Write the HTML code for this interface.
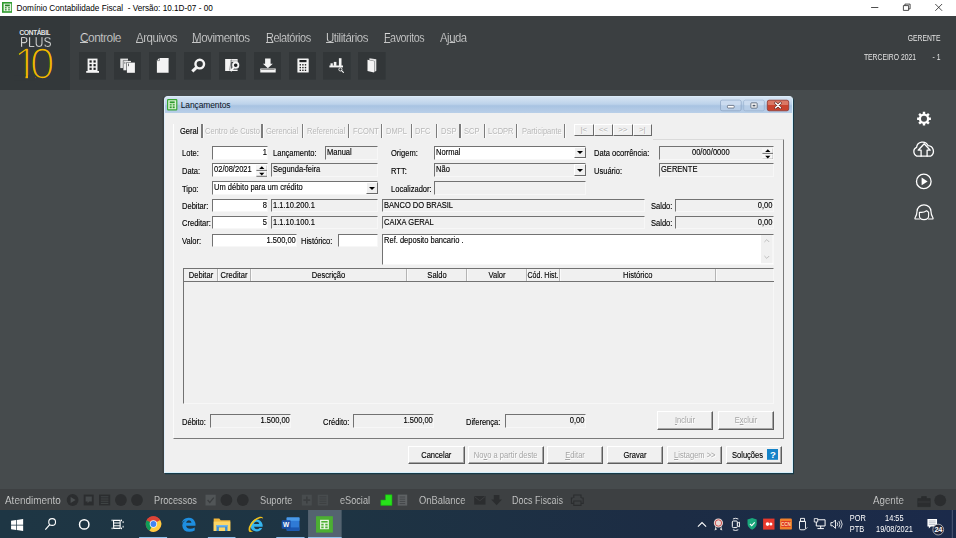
<!DOCTYPE html>
<html lang="pt-BR">
<head>
<meta charset="utf-8">
<title>Domínio Contabilidade Fiscal</title>
<style>
*{box-sizing:border-box;margin:0;padding:0}
html,body{width:956px;height:538px;overflow:hidden;background:#464b4d;font-family:"Liberation Sans",sans-serif}
.a{position:absolute;white-space:nowrap}
#titlebar{left:0;top:0;width:956px;height:16px;background:#fff}
#titlebar .t{left:16.6px;top:4px;font-size:8.2px;color:#000;line-height:10px}
#header{left:0;top:16px;width:956px;height:73.5px;background:#3b3f41}
#logo{left:0;top:16px;width:70px;height:73.5px;background:#33383a}
.menu{-webkit-text-stroke:0.2px #3b3f41;transform-origin:0 0;top:29.5px;font-size:11.9px;color:#dadada;line-height:16px;letter-spacing:-0.5px}
.menu u{text-decoration:none;background:linear-gradient(#d6d6d6,#d6d6d6) 0 11.3px/100% 0.9px no-repeat}
.ib{top:52px;width:28px;height:28px;background:#2f3234}
.hr{color:#e4e4e4;font-size:9px;line-height:10px;text-align:right;right:15px;transform:scaleX(0.755);transform-origin:100% 0}
#status{left:0;top:489.4px;width:956px;height:20.4px;background:#3d4042}
.st{-webkit-text-stroke:0.2px #3d4042;top:494px;font-size:10.2px;color:#dedede;line-height:13px;transform-origin:0 0}
#taskbar{left:0;top:509.6px;width:956px;height:28.4px;background:linear-gradient(90deg,#1e3644 0%,#1e3443 35%,#1c2c44 70%,#1b2a4a 100%)}
.tk{font-size:8.2px;line-height:10px;color:#fff;text-align:center;transform:scaleX(0.9);transform-origin:50% 0}
/* dialog */
#dlg{left:163.6px;top:95.6px;width:629.6px;height:377px;background:#f0f0f0;border-radius:4px 4px 0 0;border:1px solid #dcecf9;border-right:1.8px solid #d6eefa;border-bottom:1px solid #d6eefa;box-shadow:1px 1.2px 0 #173a48,-1.6px 0 0 #3c4042}
#dtitle{left:164.5px;top:96.5px;width:627px;height:16.5px;border-radius:3px 3px 0 0;background:linear-gradient(180deg,#d6e4f3 0%,#bcd2ea 45%,#a8c3e2 55%,#b9cfe8 100%)}
.dt{left:180.7px;top:100px;font-size:8.5px;line-height:11px;color:#0c1424;letter-spacing:-0.12px}
.dl{font-size:9.6px;line-height:11px;color:#000;transform:scaleX(0.785);transform-origin:0 0}
.dl.c{transform-origin:50% 0;text-align:center}
.f{height:13.7px;border-top:1.7px solid #727272;border-left:1.7px solid #727272;border-right:1px solid #f7f7f7;border-bottom:1px solid #f7f7f7;font-size:9.6px;line-height:10px;color:#000;padding:0 1px;overflow:hidden;background:#f0f0f0}
.s{display:block;transform:scaleX(0.785);transform-origin:0 0;white-space:nowrap}
.r .s{transform-origin:100% 0}
.c .s,.btn .s{transform-origin:50% 0}
.btn .s{margin:0 -20px}
.dl,.f,.btn,.tab{-webkit-text-stroke-width:0.15px}
.w{background:#fff}
.tab.on{-webkit-text-stroke-width:0.15px}
.r{text-align:right;padding-right:0}
.r .s{margin-right:0.2px}
.c{text-align:center}
.btn{height:18.4px;border:1px solid;border-color:#fff #5e5e5e #5e5e5e #fff;box-shadow:inset -1px -1px 0 #a6a6a6;background:#f0f0f0;font-size:9.6px;line-height:16px;text-align:center;color:#000}
.dis{color:#a4a4a4;text-shadow:0.7px 0.7px 0 #fff;-webkit-text-stroke-width:0}
.tab{-webkit-text-stroke-width:0;top:125.3px;font-size:9.6px;line-height:11px;color:#b8b8b8;text-shadow:0.7px 0.7px 0 #fff;transform:scaleX(0.785);transform-origin:0 0}
.sep{top:124.4px;width:1.2px;height:13.6px;background:#7c7c7c;box-shadow:1px 0 0 #fbfbfb}
.nb{top:124px;height:12.4px;width:19.6px;border-right:1.4px solid #6a6a6a;border-bottom:1.4px solid #6a6a6a;border-top:1px solid #fff;border-left:1px solid #fff;color:#b0b0b0;font-size:8px;line-height:9px;text-align:center;text-shadow:0.7px 0.7px 0 #fff}
.cb{width:12px;height:11.2px;background:#f0f0f0;border:1px solid;border-color:#fff #6a6a6a #6a6a6a #fff}
.cb:after{content:"";position:absolute;left:1.9px;top:3.2px;width:0;height:0;border-left:3.1px solid transparent;border-right:3.1px solid transparent;border-top:3.3px solid #000}
</style>
</head>
<body>
<div class="a" id="titlebar">
  <svg class="a" style="left:1.6px;top:2.2px" width="10.8" height="10.8" viewBox="0 0 10.8 10.8"><rect x="0.8" y="0.8" width="9.2" height="9.2" fill="#e4f6e0" stroke="#2f9a2e" stroke-width="1.6"/><rect x="3" y="2.6" width="4.8" height="1.7" fill="#2a7f2a"/><rect x="3" y="5.2" width="1.6" height="1.2" fill="#2a7f2a"/><rect x="6.2" y="5.2" width="1.6" height="1.2" fill="#2a7f2a"/><rect x="3" y="7.2" width="1.6" height="1.2" fill="#2a7f2a"/><rect x="6.2" y="7.2" width="1.6" height="1.2" fill="#2a7f2a"/></svg>
  <div class="a t">Domínio Contabilidade Fiscal&nbsp; - Versão: 10.1D-07 - 00</div>
</div>
<div class="a" id="header"></div>
<div class="a" id="logo"></div>

<div class="a" style="left:19.5px;top:28.6px;font-size:6.3px;line-height:7px;color:#fff;letter-spacing:-0.1px;-webkit-text-stroke:0.15px #fff">CONTÁBIL</div>
<div class="a" style="left:19.8px;top:34.2px;font-size:14px;line-height:16px;color:#f6f6f6;letter-spacing:0;-webkit-text-stroke:0.35px #33383a;transform:scaleX(0.86);transform-origin:0 0">PLUS</div>
<svg class="a" style="left:10px;top:47px" width="50" height="36" viewBox="0 0 50 36"><text x="3.7 20" y="32.4" font-family="Liberation Sans, sans-serif" font-size="44" fill="#f4b800" stroke="#33383a" stroke-width="1.6">10</text><rect x="4" y="28.4" width="11.5" height="5" fill="#33383a"/><rect x="18" y="28.4" width="7" height="5" fill="#33383a"/></svg>
<div class="a menu" style="left:80px;transform:scaleX(1.0)"><u>C</u>ontrole</div>
<div class="a menu" style="left:136px;transform:scaleX(0.97)"><u>A</u>rquivos</div>
<div class="a menu" style="left:192px;transform:scaleX(0.973)"><u>M</u>ovimentos</div>
<div class="a menu" style="left:265.6px;transform:scaleX(0.922)"><u>R</u>elatórios</div>
<div class="a menu" style="left:326px;transform:scaleX(0.965)"><u>U</u>tilitários</div>
<div class="a menu" style="left:383.6px;transform:scaleX(0.905)"><u>F</u>avoritos</div>
<div class="a menu" style="left:440px;transform:scaleX(0.953)">Aj<u>u</u>da</div>
<div class="a hr" id="h1" style="top:32.5px">GERENTE</div>
<div class="a hr" id="h2" style="top:51.5px;right:40px">TERCEIRO 2021</div>
<div class="a hr" id="h3" style="top:51.5px">- 1</div>
<svg class="a" style="left:866px;top:0" width="90" height="16" viewBox="0 0 90 16"><path d="M5.1 7.5 h7.2" stroke="#222" stroke-width="0.8" fill="none"/><path d="M37.4 5.6 h5.2 v4.8 h-5.2z M38.9 5.6 v-1.5 h5.2 v4.8 h-1.5" stroke="#222" stroke-width="0.8" fill="none"/><path d="M69.3 4 l6.8 6.8 M76.1 4 l-6.8 6.8" stroke="#222" stroke-width="0.8" fill="none"/></svg>
<svg class="a" style="left:78.80px;top:52.2px" width="27.6" height="27.6" viewBox="0 0 27.6 27.6"><rect width="27.6" height="27.6" fill="#323638"/><rect x="8.6" y="6.6" width="9.9" height="12.6" fill="#f4f4f4"/><rect x="7.2" y="19" width="12.8" height="1.8" fill="#f4f4f4"/><rect x="10.5" y="8.4" width="2.2" height="2.2" fill="#1e2022"/><rect x="10.5" y="12.1" width="2.2" height="2.2" fill="#1e2022"/><rect x="10.5" y="15.7" width="2.2" height="2.2" fill="#1e2022"/><rect x="14.5" y="8.4" width="2.2" height="2.2" fill="#1e2022"/><rect x="14.5" y="12.1" width="2.2" height="2.2" fill="#1e2022"/><rect x="14.5" y="15.7" width="2.2" height="2.2" fill="#1e2022"/></svg>
<svg class="a" style="left:113.75px;top:52.2px" width="27.6" height="27.6" viewBox="0 0 27.6 27.6"><rect width="27.6" height="27.6" fill="#323638"/><rect x="6.3" y="6.6" width="7.7" height="9.5" fill="#e0e0e0"/><rect x="8.9" y="8.5" width="8.2" height="10" fill="#323638"/><rect x="9.4" y="8.9" width="7.5" height="9.4" fill="#ececec"/><rect x="12.4" y="10.2" width="8.7" height="10.8" fill="#323638"/><rect x="12.9" y="10.6" width="8" height="10.2" fill="#f4f4f4"/><rect x="14.2" y="11.6" width="0.7" height="2.6" fill="#323638"/><rect x="10.6" y="9.8" width="0.6" height="2" fill="#323638"/></svg>
<svg class="a" style="left:148.70px;top:52.2px" width="27.6" height="27.6" viewBox="0 0 27.6 27.6"><rect width="27.6" height="27.6" fill="#323638"/><path d="M7.9 8.4 l2.4 -2.4 h9.3 v14.7 h-11.7z" fill="#f4f4f4"/><path d="M7.9 8.6 h2.6 v-2.6" fill="none" stroke="#323638" stroke-width="0.5"/></svg>
<svg class="a" style="left:183.65px;top:52.2px" width="27.6" height="27.6" viewBox="0 0 27.6 27.6"><rect width="27.6" height="27.6" fill="#323638"/><circle cx="15.75" cy="12.1" r="4.3" fill="none" stroke="#f4f4f4" stroke-width="2.4"/><path d="M12.3 15.6 L8.3 19.4" stroke="#f4f4f4" stroke-width="3" stroke-linecap="butt"/></svg>
<svg class="a" style="left:218.60px;top:52.2px" width="27.6" height="27.6" viewBox="0 0 27.6 27.6"><rect width="27.6" height="27.6" fill="#323638"/><path d="M6.4 7 h12.2 v3 h-6.4 v9 h-5.8z" fill="#f4f4f4"/><path d="M6.4 7 h6 l-1.2 12 h-4.8z" fill="#f4f4f4"/><path d="M11.2 8.3 h7 M11.6 9.3 h6.6" stroke="#9a9a9a" stroke-width="0.5"/><path d="M12.2 17.6 h6.4 v1.4 h-6.4z" fill="#f4f4f4"/><circle cx="16.7" cy="13.2" r="2.7" fill="#1e2022" stroke="#f4f4f4" stroke-width="1.8"/><path d="M14.6 15.6 L11.6 19.2" stroke="#f4f4f4" stroke-width="2" stroke-linecap="butt"/><path d="M12.4 7.6 L10.6 18.4" stroke="#323638" stroke-width="0.5"/></svg>
<svg class="a" style="left:253.55px;top:52.2px" width="27.6" height="27.6" viewBox="0 0 27.6 27.6"><rect width="27.6" height="27.6" fill="#323638"/><path d="M11.1 6.6 h5.5 v5.1 h2.2 l-4.95 4.6 l-4.95 -4.6 h2.2z" fill="#f4f4f4"/><rect x="6.3" y="16.5" width="15.4" height="4" fill="#f4f4f4"/><rect x="7.2" y="17.4" width="13.4" height="0.6" fill="#555"/></svg>
<svg class="a" style="left:288.50px;top:52.2px" width="27.6" height="27.6" viewBox="0 0 27.6 27.6"><rect width="27.6" height="27.6" fill="#323638"/><rect x="8.4" y="6.6" width="11.3" height="13.9" rx="0.5" fill="#f4f4f4"/><rect x="10.4" y="8" width="7.1" height="2.2" fill="#1e2022"/><rect x="10.600000000000001" y="12.100000000000001" width="1.4" height="1.4" fill="#222"/><rect x="10.600000000000001" y="14.9" width="1.4" height="1.4" fill="#222"/><rect x="10.600000000000001" y="17.6" width="1.4" height="1.4" fill="#222"/><rect x="13.200000000000001" y="12.100000000000001" width="1.4" height="1.4" fill="#222"/><rect x="13.200000000000001" y="14.9" width="1.4" height="1.4" fill="#222"/><rect x="13.200000000000001" y="17.6" width="1.4" height="1.4" fill="#222"/><rect x="15.8" y="12.100000000000001" width="1.4" height="1.4" fill="#222"/><rect x="15.8" y="14.9" width="1.4" height="1.4" fill="#222"/><rect x="15.8" y="17.6" width="1.4" height="1.4" fill="#222"/></svg>
<svg class="a" style="left:323.45px;top:52.2px" width="27.6" height="27.6" viewBox="0 0 27.6 27.6"><rect width="27.6" height="27.6" fill="#323638"/><rect x="7.5" y="11.3" width="2.3" height="3" fill="#f4f4f4"/><rect x="10.8" y="9.9" width="2.6" height="4" fill="#f4f4f4"/><rect x="15.9" y="6.2" width="2.6" height="8" fill="#f4f4f4"/><rect x="6.4" y="13.5" width="13.6" height="1.9" fill="#f4f4f4"/><circle cx="17.4" cy="17.4" r="1.6" fill="#323638" stroke="#f4f4f4" stroke-width="0.9"/><path d="M18.6 18.6 L20.4 20.5" stroke="#f4f4f4" stroke-width="1.1" stroke-linecap="round"/></svg>
<svg class="a" style="left:358.40px;top:52.2px" width="27.6" height="27.6" viewBox="0 0 27.6 27.6"><rect width="27.6" height="27.6" fill="#323638"/><path d="M11.4 6.2 L18.3 7.3 V18.7 L16.4 19.9 V9 L11.4 7.9z" fill="#e4e4e4"/><path d="M9.5 7.7 L16.1 9.3 V20.5 L9.5 19z" fill="#f4f4f4"/></svg>
<svg class="a" style="left:908px;top:106px" width="32" height="120" viewBox="0 0 32 120">
<path d="M22.90 11.50 L22.90 13.90 L21.06 13.91 L20.43 15.42 L21.73 16.73 L20.03 18.43 L18.72 17.13 L17.21 17.76 L17.20 19.60 L14.80 19.60 L14.79 17.76 L13.28 17.13 L11.97 18.43 L10.27 16.73 L11.57 15.42 L10.94 13.91 L9.10 13.90 L9.10 11.50 L10.94 11.49 L11.57 9.98 L10.27 8.67 L11.97 6.97 L13.28 8.27 L14.79 7.64 L14.80 5.80 L17.20 5.80 L17.21 7.64 L18.72 8.27 L20.03 6.97 L21.73 8.67 L20.43 9.98 L21.06 11.49Z" fill="#fff"/><circle cx="16" cy="12.7" r="3" fill="#494d4f"/>
<path d="M13.1 50.2 H10.4 A4.6 4.6 0 0 1 8.6 41.4 A6 6 0 0 1 20 39.6 A5.7 5.7 0 0 1 22.6 50.2 H19.1" fill="none" stroke="#fff" stroke-width="1.3" stroke-linecap="round" stroke-linejoin="round"/>
<path d="M16.2 37.8 L22.2 44.2 H19.1 V50.2 H13.1 V44.2 H10.2 Z" fill="none" stroke="#fff" stroke-width="1.3" stroke-linejoin="round"/>
<circle cx="15.8" cy="75.4" r="7.3" fill="none" stroke="#fff" stroke-width="1.3"/><path d="M13.6 71.6 l6 3.8 l-6 3.8z" fill="#fff"/>
<path d="M11.4 113 H7.6 Q6.6 113 7.1 111.8 Q9 108.8 9 105.6 A7 6.8 0 0 1 23 105.6 Q23 108.8 24.9 111.8 Q25.4 113 24.4 113 H20.6" fill="none" stroke="#fff" stroke-width="1.2" stroke-linejoin="round" stroke-linecap="round"/>
<path d="M11.4 110 V106.2 Q15.4 107 18.6 104.8 Q20 105.4 20.6 106.6 V110 Q20.6 113.6 16 113.6 Q11.4 113.6 11.4 110z" fill="none" stroke="#fff" stroke-width="1.1" stroke-linejoin="round"/>
</svg>
<div class="a" id="status"></div>
<div class="a" id="taskbar"></div>
<div class="a st" id="s1" style="left:4.6px;transform:scaleX(0.974)">Atendimento</div>
<div class="a st" id="s2" style="left:153.8px;transform:scaleX(0.902)">Processos</div>
<div class="a st" id="s3" style="left:259.5px;transform:scaleX(0.908)">Suporte</div>
<div class="a st" id="s4" style="left:340px;transform:scaleX(0.898)">eSocial</div>
<div class="a st" id="s5" style="left:418.5px;transform:scaleX(0.922)">OnBalance</div>
<div class="a st" id="s6" style="left:512.4px;transform:scaleX(0.883)">Docs Fiscais</div>
<div class="a st" id="s7" style="left:873.1px;transform:scaleX(0.954)">Agente</div>
<svg class="a" style="left:0;top:489px" width="956" height="21" viewBox="0 0 956 21">
<circle cx="72.6" cy="11" r="5.9" fill="#2b2d2f"/><path d="M70.6 8 l5 3 l-5 3z" fill="#4a4e50"/>
<rect x="83.7" y="5.6" width="10" height="10.8" fill="#2b2d2f"/><path d="M85.6 7.6 h6.2 v5 h-2.6 l-1.6 1.6 v-1.6 h-2z" fill="#45494b"/>
<rect x="99" y="5.6" width="11.2" height="10.8" fill="#2b2d2f"/><path d="M100.8 7.8 h7.6 M100.8 10 h7.6 M100.8 12.2 h7.6 M100.8 14.4 h7.6" stroke="#45494b" stroke-width="0.9"/>
<circle cx="120.9" cy="11" r="5.9" fill="#2b2d2f"/><circle cx="137" cy="11" r="5.9" fill="#2b2d2f"/>
<rect x="205.5" y="5.7" width="10.2" height="10.8" fill="#515557"/><path d="M207.6 11 l2.2 2.4 l4 -4.8" fill="none" stroke="#3a3d3f" stroke-width="1.3"/>
<circle cx="226.4" cy="11" r="5.9" fill="#2b2d2f"/><circle cx="242.8" cy="11" r="5.9" fill="#2b2d2f"/>
<rect x="301.8" y="5.7" width="10" height="10.8" fill="#484c4e"/><path d="M306.8 7.6 v7 M303.4 11.1 h6.8" stroke="#3a3d3f" stroke-width="1.6"/>
<rect x="317.7" y="5.7" width="10.4" height="10.8" fill="#484c4e"/><path d="M319.4 7.8 h7 M319.4 10 h7 M319.4 12.2 h7 M319.4 14.4 h7" stroke="#3a3d3f" stroke-width="0.8"/>
<path d="M380.8 16.4 v-5.4 h4.6 v-5.2 h6.6 v10.6z" fill="#27e31a" stroke="#18a812" stroke-width="0.6"/>
<rect x="397.7" y="5.6" width="9.5" height="11" fill="#5e6264"/><path d="M399.6 8 h5.6 M399.6 10.2 h5.6 M399.6 12.4 h5.6 M399.6 14.6 h5.6" stroke="#3d4042" stroke-width="0.8"/>
<path d="M474.2 7 h11.3 v8.6 h-11.3z" fill="#2b2d2f"/><path d="M474.6 7.6 l5.2 4.2 l5.2 -4.2" fill="none" stroke="#3d4042" stroke-width="0.9"/>
<path d="M493.8 6 h5.6 v4.4 h2.6 l-5.4 5.8 l-5.4 -5.8 h2.6z" fill="#2b2d2f"/>
<path d="M573 9 h-1.6 v5.4 h2.4 M581.4 9 h1.8 v5.4 h-2.4 M573.8 9 v-3 h7.2 v3 M573.8 12 h7.2 v4.4 h-7.2z" fill="none" stroke="#2b2d2f" stroke-width="1.1"/>
<path d="M917.8 9.6 h12.4 v8 h-12.4z M921.6 9.4 v-1.8 h4.8 v1.8" fill="#2b2d2f" stroke="#2b2d2f" stroke-width="0.8"/><path d="M917.8 13 h12.4" stroke="#3d4042" stroke-width="0.7"/>
<circle cx="940.2" cy="11.3" r="5.9" fill="#2b2d2f"/>
</svg>
<svg class="a" style="left:0;top:509.6px" width="956" height="28.4" viewBox="0 0 956 28.4">
<rect x="308" y="0" width="33.6" height="28.4" fill="#546370"/>
<g fill="#8fc1ec"><rect x="139" y="27" width="28" height="1.4"/><rect x="207.8" y="27" width="27.6" height="1.4"/><rect x="276.2" y="27" width="28.3" height="1.4"/><rect x="308" y="27" width="33.6" height="1.4"/></g>
<g fill="#fff"><path d="M10.9 10.8 l5 -0.7 v4.6 h-5z M16.6 10 l6.4 -0.9 v5.6 h-6.4z M10.9 15.4 h5 v4.6 l-5 -0.7z M16.6 15.4 h6.4 v5.6 l-6.4 -0.9z"/></g>
<circle cx="52" cy="12" r="3.4" fill="none" stroke="#fff" stroke-width="1.1"/><path d="M49.6 14.6 L45.2 19.6" stroke="#fff" stroke-width="1.2"/>
<circle cx="84.1" cy="14.4" r="4.7" fill="none" stroke="#fff" stroke-width="1.5"/>
<path d="M113.4 10.4 h6.6 v8 h-6.4z" fill="none" stroke="#fff" stroke-width="1.1"/><path d="M112 9.6 v1.6 M112 17.6 v1.6 M121.4 9.6 v1.6 M121.4 17.6 v1.6 M123 11.2 v1.8 M123 15.8 v1.8 M113.4 13 h6.6 M113.4 15.8 h6.6" stroke="#fff" stroke-width="1"/>
<!-- chrome -->
<circle cx="153.3" cy="14" r="7.8" fill="#db4437"/><path d="M153.3 14 L146.5 10.2 A7.8 7.8 0 0 0 149.4 20.75z" fill="#0f9d58"/><path d="M153.3 14 L149.4 20.75 A7.8 7.8 0 0 0 160.05 10.1z" fill="#ffcd40"/><path d="M146.5 10.1 A7.8 7.8 0 0 1 160.05 10.1 H153.3z" fill="#db4437"/><circle cx="153.3" cy="14" r="3.7" fill="#f4f4f4"/><circle cx="153.3" cy="14" r="2.9" fill="#4285f4"/>
<!-- edge -->
<path d="M181.6 13.2 a7 7 0 0 1 13.6 -0.4 q0.4 1.6 0.2 3 h-9.4 q0.4 3 4 3 q2.4 0 4.6 -1.2 v3 q-2.4 1.2 -5.4 1.2 q-6.6 0 -7 -6.4 q0.2 -3.6 3.6 -5.2 q-2.8 0.6 -4.2 3z M186 12.8 h5.4 q-0.2 -2.6 -2.6 -2.6 q-2.4 0 -2.8 2.6z" fill="#1e8ee0"/>
<!-- explorer -->
<path d="M213.6 8.6 h5.6 l1.4 1.6 h9.6 v10.8 h-16.6z" fill="#f2b73c"/><path d="M213.6 11.6 h16.6 v9.4 h-16.6z" fill="#fbd668"/><path d="M216.4 15 h11 v6 h-11z" fill="#3b8fd6"/><path d="M218.8 17.4 h6.2 v3.6 h-6.2z" fill="#fbd668"/><path d="M216.4 15 h11 v1.6 h-11z" fill="#6bb4ef"/>
<!-- IE -->
<path d="M250.2 15.6 a6.2 6.2 0 0 1 12.3 -1 q0.2 1.4 0 2.2 h-8.6 q0.6 2.4 3 2.4 q1.6 0 2.6 -1.2 h2.6 q-1.6 3.4 -5.4 3.4 q-5.8 0 -6.5 -5.8z M253.8 14 h5.4 q-0.4 -2.2 -2.7 -2.2 q-2.2 0 -2.7 2.2z" fill="#35b5ef"/><path d="M249 21.4 q-1.6 -3 1.6 -8 q3.4 -5 9 -6.6 q3.6 -0.8 3.4 2.2 q-0.6 -1.6 -3.2 -0.8 q-4.6 1.6 -7.6 6 q-3 4.4 -1.4 6.4 q0.8 0.8 2.6 0.2 q-2.8 2 -4.4 0.6z" fill="#f2c21c"/>
<!-- word -->
<rect x="286.6" y="7.4" width="12.8" height="13.4" rx="0.8" fill="#2f7ad5"/><rect x="286.6" y="7.4" width="12.8" height="3.4" fill="#4a9bea"/><rect x="286.6" y="17.4" width="12.8" height="3.4" fill="#1b57b0"/><rect x="281.6" y="10.2" width="9" height="8.6" rx="0.8" fill="#1a4fa6"/><text x="286.1" y="17.2" text-anchor="middle" font-family="Liberation Sans, sans-serif" font-weight="bold" font-size="6.6" fill="#fff">W</text>
<!-- calc -->
<rect x="316" y="6.2" width="16.8" height="16.4" fill="#4caf32"/><rect x="320" y="9.8" width="8.8" height="9.4" fill="#eaf6e6"/><rect x="321.2" y="11" width="6.4" height="1.6" fill="#4caf32"/><path d="M321.2 13.8 h2.4 v1.6 h-2.4z M325.2 13.8 h2.4 v1.6 h-2.4z M321.2 16.4 h2.4 v1.8 h-2.4z M325.2 16.4 h2.4 v1.8 h-2.4z" fill="#4caf32"/>
<!-- tray -->
<path d="M698 16.6 l4.1 -4 l4.1 4" fill="none" stroke="#fff" stroke-width="1.1"/>
<circle cx="718.5" cy="13" r="4.6" fill="#e8d9d6"/><circle cx="718.5" cy="13" r="3.2" fill="none" stroke="#c9504e" stroke-width="1"/><path d="M715.6 16.4 l-1 4.2 l2.4 -1 z M721.4 16.4 l1 4.2 l-2.4 -1z" fill="#d8d8d8"/>
<rect x="732.4" y="11" width="5" height="6.6" rx="1" fill="none" stroke="#fff" stroke-width="1"/><path d="M737.6 13.2 l2 -1 v4.6 l-2 -1" fill="none" stroke="#fff" stroke-width="0.9"/><path d="M733 9 q2.6 -1.4 5.4 0 M733 19.8 q2.6 1.4 5.4 0" fill="none" stroke="#fff" stroke-width="0.9"/>
<path d="M752.2 8 l4.6 1.6 v4 q0 4 -4.6 6.2 q-4.6 -2.2 -4.6 -6.2 v-4z" fill="#1aa77c"/><path d="M750 13.8 l1.8 1.9 l3 -3.4" fill="none" stroke="#fff" stroke-width="1.1"/>
<rect x="763.2" y="8.6" width="11.4" height="11" fill="#e8392d"/><circle cx="767.6" cy="14.1" r="1.8" fill="#fff"/><circle cx="771" cy="14.1" r="1.5" fill="#fff"/>
<rect x="780" y="8.6" width="12" height="11" rx="1.2" fill="#f0802c"/><rect x="781.4" y="11" width="9.2" height="6" fill="#e03a24"/><text x="786" y="16.2" text-anchor="middle" font-family="Liberation Sans, sans-serif" font-weight="bold" font-size="4.6" fill="#ffd9a0">CCN</text>
<path d="M800.6 8.4 h4 v3 h-4z M799.6 11.4 h6 v7 q0 1.4 -1.4 1.4 h-3.2 q-1.4 0 -1.4 -1.4z" fill="none" stroke="#fff" stroke-width="0.9"/><path d="M805.8 19 l1.6 -1.6" stroke="#fff" stroke-width="0.8"/>
<path d="M816.4 9.8 h8.8 v6.2 h-8.8z M820.8 16 v2.4 M817.6 18.6 h6.4" fill="none" stroke="#fff" stroke-width="1"/><path d="M814.4 8.6 h3.4 v3.4 h-3.4z" fill="#1c2a46" stroke="#fff" stroke-width="0.8"/>
<path d="M831 12.6 h2 l2.6 -2.6 v8.4 l-2.6 -2.6 h-2z" fill="none" stroke="#fff" stroke-width="0.9"/><path d="M837.2 12.4 q1.2 1.8 0 3.6 M839 11 q2.2 3.2 0 6.4 M840.8 9.8 q3 4.4 0 8.8" fill="none" stroke="#fff" stroke-width="0.8"/>
<path d="M927.6 9 h9.6 v7.4 h-6.2 l-2 2 v-2 h-1.4z" fill="#fff"/><path d="M929 11 h6.8 M929 12.8 h6.8 M929 14.6 h6.8" stroke="#8a93a6" stroke-width="0.6"/>
<circle cx="938.4" cy="19.6" r="5.4" fill="#23263a" stroke="#d8d8d8" stroke-width="0.7"/><text x="938.4" y="22.2" text-anchor="middle" font-family="Liberation Sans, sans-serif" font-weight="bold" font-size="7.4" fill="#fff" letter-spacing="-0.4">24</text>
<rect x="952" y="0" width="0.8" height="28.4" fill="#5a6680"/>
</svg>
<div class="a tk" style="left:849px;top:513.6px;width:16px">POR</div>
<div class="a tk" style="left:849px;top:525.3px;width:16px">PTB</div>
<div class="a tk" style="left:874px;top:513.6px;width:40.6px">14:55</div>
<div class="a tk" style="left:874px;top:525.3px;width:40.6px">19/08/2021</div>
<!--DLG-->
<div class="a" id="dlg"></div>
<div class="a" id="dtitle"></div>
<svg class="a" style="left:167.4px;top:99.4px" width="10.4" height="11.4" viewBox="0 0 10.4 11.4"><rect x="0.6" y="0.6" width="9.2" height="10.2" rx="0.6" fill="#d9f3d2" stroke="#38a636" stroke-width="1.2"/><rect x="2.7" y="2.4" width="5" height="1.8" fill="#2f9a2e"/><rect x="2.7" y="5.2" width="2" height="1.3" fill="#2f9a2e"/><rect x="5.7" y="5.2" width="2" height="1.3" fill="#2f9a2e"/><rect x="2.7" y="7.4" width="2" height="1.8" fill="#2f9a2e"/><rect x="5.7" y="7.4" width="2" height="1.8" fill="#2f9a2e"/></svg>
<div class="a dt" style="left:180.7px;top:100px">Lançamentos</div>
<svg class="a" style="left:716.3px;top:96.7px" width="78" height="18" viewBox="0 0 78 18">
<rect x="4.5" y="3.2" width="20.6" height="10.6" rx="1.6" fill="#b7cde7" stroke="#8ea6c4" stroke-width="0.8"/><rect x="4.9" y="3.6" width="19.8" height="4.6" rx="1.2" fill="#cfdff1" opacity="0.8"/>
<rect x="11.4" y="8.4" width="6.8" height="2.6" rx="0.8" fill="#fff" stroke="#4a5566" stroke-width="0.7"/>
<rect x="27.7" y="3.2" width="20.6" height="10.6" rx="1.6" fill="#b7cde7" stroke="#9db4d0" stroke-width="0.8"/><rect x="28.1" y="3.6" width="19.8" height="4.6" rx="1.2" fill="#cfdff1" opacity="0.8"/>
<rect x="34.9" y="5.9" width="6.2" height="5.2" rx="0.6" fill="#fff" stroke="#4a5566" stroke-width="0.8"/><rect x="36.6" y="7.8" width="2.8" height="1.6" fill="#4a5566"/>
<rect x="51.3" y="3.2" width="21.4" height="10.6" rx="1.8" fill="#c9432e" stroke="#8f3a32" stroke-width="0.8"/><rect x="51.8" y="3.7" width="20.4" height="4.4" rx="1.2" fill="#e08a78" opacity="0.75"/>
<path d="M59.6 6 l4.8 4.8 M64.4 6 l-4.8 4.8" stroke="#5a2a28" stroke-width="2.6" stroke-linecap="round"/><path d="M59.6 6 l4.8 4.8 M64.4 6 l-4.8 4.8" stroke="#fff" stroke-width="1.5" stroke-linecap="round"/>
</svg>
<div class="a" style="left:173px;top:139px;width:611px;height:300px;border:1px solid;border-color:transparent #7a7a7a #7a7a7a #fafafa"></div>
<div class="a" style="left:174px;top:138px;width:27.5px;height:2.4px;background:#f0f0f0"></div>
<div class="a" style="left:173px;top:124px;width:1px;height:16px;background:#fff"></div>
<div class="a" style="left:653px;top:139px;width:130px;height:1px;background:#dadada"></div>
<div class="a tab on" style="left:179.6px;color:#000;text-shadow:none">Geral</div>
<div class="a tab" style="left:205.2px">Centro de Custo</div>
<div class="a tab" style="left:266.4px">Gerencial</div>
<div class="a tab" style="left:306.6px">Referencial</div>
<div class="a tab" style="left:352.8px">FCONT</div>
<div class="a tab" style="left:386.2px">DMPL</div>
<div class="a tab" style="left:415.2px">DFC</div>
<div class="a tab" style="left:440.6px">DSP</div>
<div class="a tab" style="left:463.8px">SCP</div>
<div class="a tab" style="left:487.6px">LCDPR</div>
<div class="a tab" style="left:521.8px">Participante</div>
<div class="a sep" style="left:201.4px"></div>
<div class="a sep" style="left:261.4px"></div>
<div class="a sep" style="left:301.8px"></div>
<div class="a sep" style="left:348.2px"></div>
<div class="a sep" style="left:380.8px"></div>
<div class="a sep" style="left:410.8px"></div>
<div class="a sep" style="left:435.8px"></div>
<div class="a sep" style="left:459.4px"></div>
<div class="a sep" style="left:483.8px"></div>
<div class="a sep" style="left:516px"></div>
<div class="a sep" style="left:563.6px"></div>
<div class="a nb" style="left:574.0px">|&lt;</div>
<div class="a nb" style="left:593.5px">&lt;&lt;</div>
<div class="a nb" style="left:613.0px">&gt;&gt;</div>
<div class="a nb" style="left:632.5px">&gt;|</div>
<div class="a dl" style="left:181.8px;top:147.2px">Lote:</div>
<div class="a f w r" style="left:211.6px;top:145.9px;width:56.2px"><span class="s">1</span></div>
<div class="a dl" style="left:273px;top:147.2px">Lançamento:</div>
<div class="a f " style="left:324.6px;top:145.9px;width:53px"><span class="s">Manual</span></div>
<div class="a dl" style="left:390.8px;top:147.2px">Origem:</div>
<div class="a f w" style="left:434.4px;top:145.9px;width:151.8px"><span class="s">Normal</span></div>
<div class="a cb" style="left:574px;top:147.3px"></div>
<div class="a dl" style="left:594.4px;top:147.2px">Data ocorrência:</div>
<div class="a f c" style="left:659px;top:145.9px;width:114.6px;padding-right:12px"><span class="s">00/00/0000</span></div>
<div class="a dl" style="left:181.8px;top:164.5px">Data:</div>
<div class="a f w" style="left:211.6px;top:163px;width:56.2px"><span class="s">02/08/2021</span></div>
<div class="a f " style="left:271.4px;top:163px;width:106.2px"><span class="s">Segunda-feira</span></div>
<div class="a dl" style="left:390.8px;top:164.5px">RTT:</div>
<div class="a f " style="left:434.4px;top:163px;width:151.8px"><span class="s">Não</span></div>
<div class="a cb" style="left:574px;top:164.4px"></div>
<div class="a dl" style="left:594.4px;top:164.5px">Usuário:</div>
<div class="a f " style="left:659px;top:163px;width:114.6px"><span class="s">GERENTE</span></div>
<svg class="a" style="left:761.6px;top:147.6px" width="11.8" height="11.8" viewBox="0 0 11.8 11.8"><rect width="11.8" height="11.8" fill="#f6f6f6"/><path d="M0.4 5.4 H11.3 V0.6 M0.4 11.3 H11.3 V6.4" fill="none" stroke="#6c6c6c" stroke-width="1"/><path d="M3.2 4.1 L5.8 1.3 L8.4 4.1Z M3.2 7.7 H8.4 L5.8 10.5Z" fill="#000"/></svg>
<svg class="a" style="left:255.7px;top:164.8px" width="11.8" height="11.8" viewBox="0 0 11.8 11.8"><rect width="11.8" height="11.8" fill="#f6f6f6"/><path d="M0.4 5.4 H11.3 V0.6 M0.4 11.3 H11.3 V6.4" fill="none" stroke="#6c6c6c" stroke-width="1"/><path d="M3.2 4.1 L5.8 1.3 L8.4 4.1Z M3.2 7.7 H8.4 L5.8 10.5Z" fill="#000"/></svg>
<div class="a dl" style="left:181.8px;top:182.6px">Tipo:</div>
<div class="a f w" style="left:211.6px;top:181px;width:166px"><span class="s">Um débito para um crédito</span></div>
<div class="a cb" style="left:365.8px;top:182.4px"></div>
<div class="a dl" style="left:390.8px;top:182.6px">Localizador:</div>
<div class="a f " style="left:434.4px;top:181px;width:151.8px"></div>
<div class="a dl" style="left:181.8px;top:200px">Debitar:</div>
<div class="a f w r" style="left:211.6px;top:198.8px;width:56.2px;height:13px"><span class="s">8</span></div>
<div class="a f " style="left:271.4px;top:198.8px;width:106.2px;height:13px"><span class="s">1.1.10.200.1</span></div>
<div class="a f " style="left:381.6px;top:198.8px;width:263.6px;height:13px"><span class="s">BANCO DO BRASIL</span></div>
<div class="a dl" style="left:650.6px;top:200px">Saldo:</div>
<div class="a f r" style="left:675px;top:198.8px;width:98.6px;height:13px"><span class="s">0,00</span></div>
<div class="a dl" style="left:181.8px;top:217.4px">Creditar:</div>
<div class="a f w r" style="left:211.6px;top:216.4px;width:56.2px;height:13px"><span class="s">5</span></div>
<div class="a f " style="left:271.4px;top:216.4px;width:106.2px;height:13px"><span class="s">1.1.10.100.1</span></div>
<div class="a f " style="left:381.6px;top:216.4px;width:263.6px;height:13px"><span class="s">CAIXA GERAL</span></div>
<div class="a dl" style="left:650.6px;top:217.4px">Saldo:</div>
<div class="a f r" style="left:675px;top:216.4px;width:98.6px;height:13px"><span class="s">0,00</span></div>
<div class="a dl" style="left:181.8px;top:235px">Valor:</div>
<div class="a f w r" style="left:211.6px;top:234px;width:85px;height:13px"><span class="s">1.500,00</span></div>
<div class="a dl" style="left:300.6px;top:235px">Histórico:</div>
<div class="a f w" style="left:338px;top:234px;width:39.6px;height:13px"></div>
<div class="a f w" style="left:381.6px;top:234px;width:392px;height:30.6px"><span class="s">Ref. deposito bancario .</span></div>
<svg class="a" style="left:761px;top:235.4px" width="11.6" height="28.2" viewBox="0 0 11.6 28.2"><rect width="11.6" height="28.2" fill="#f0f0f0"/><path d="M3.4 7 l2.4 -2.4 l2.4 2.4 M3.4 21 l2.4 2.4 l2.4 -2.4" fill="none" stroke="#bdbdbd" stroke-width="1"/></svg>
<div class="a" style="left:182.6px;top:268px;width:591px;height:136.4px;border-top:1.7px solid #727272;border-left:1.7px solid #727272;border-right:1px solid #f7f7f7;border-bottom:1px solid #f7f7f7;background:#f0f0f0"></div>
<div class="a" style="left:184px;top:280.6px;width:589.6px;height:1.8px;background:#727272"></div>
<div class="a dl c" style="left:165.8px;top:269.4px;width:70.0px">Debitar</div>
<div class="a" style="left:217.1px;top:269.4px;width:1px;height:11.6px;background:#b4b4b4;box-shadow:1px 0 0 #fafafa"></div>
<div class="a dl c" style="left:199.3px;top:269.4px;width:70.0px">Creditar</div>
<div class="a" style="left:249.9px;top:269.4px;width:1px;height:11.6px;background:#b4b4b4;box-shadow:1px 0 0 #fafafa"></div>
<div class="a dl c" style="left:251.0px;top:269.4px;width:155.0px">Descrição</div>
<div class="a" style="left:405.5px;top:269.4px;width:1px;height:11.6px;background:#b4b4b4;box-shadow:1px 0 0 #fafafa"></div>
<div class="a dl c" style="left:401.5px;top:269.4px;width:70.0px">Saldo</div>
<div class="a" style="left:465.8px;top:269.4px;width:1px;height:11.6px;background:#b4b4b4;box-shadow:1px 0 0 #fafafa"></div>
<div class="a dl c" style="left:461.6px;top:269.4px;width:70.0px">Valor</div>
<div class="a" style="left:525.7px;top:269.4px;width:1px;height:11.6px;background:#b4b4b4;box-shadow:1px 0 0 #fafafa"></div>
<div class="a dl c" style="left:508.0px;top:269.4px;width:70.0px;transform:scaleX(0.735)">Cód. Hist.</div>
<div class="a" style="left:558.8px;top:269.4px;width:1px;height:11.6px;background:#b4b4b4;box-shadow:1px 0 0 #fafafa"></div>
<div class="a dl c" style="left:559.9px;top:269.4px;width:155.4px">Histórico</div>
<div class="a" style="left:714.8px;top:269.4px;width:1px;height:11.6px;background:#b4b4b4;box-shadow:1px 0 0 #fafafa"></div>
<div class="a dl" style="left:181.8px;top:415.5px">Débito:</div>
<div class="a f r" style="left:210px;top:414.2px;width:81px"><span class="s">1.500,00</span></div>
<div class="a dl" style="left:323.4px;top:415.5px">Crédito:</div>
<div class="a f r" style="left:353px;top:414.2px;width:81px"><span class="s">1.500,00</span></div>
<div class="a dl" style="left:466.4px;top:415.5px">Diferença:</div>
<div class="a f r" style="left:505px;top:414.2px;width:80.6px"><span class="s">0,00</span></div>
<div class="a btn dis" style="left:657.4px;top:411.3px;width:56px"><span class="s"><u>I</u>ncluir</span></div>
<div class="a btn dis" style="left:718.4px;top:411.3px;width:56px"><span class="s">E<u>x</u>cluir</span></div>
<div class="a btn" style="left:408.4px;top:445.8px;width:56.6px"><span class="s">Cancelar</span></div>
<div class="a btn dis" style="left:468.2px;top:445.8px;width:75.4px"><span class="s">No<u>v</u>o a partir deste</span></div>
<div class="a btn dis" style="left:547.3px;top:445.8px;width:56px"><span class="s"><u>E</u>ditar</span></div>
<div class="a btn" style="left:607px;top:445.8px;width:56px"><span class="s">Gravar</span></div>
<div class="a btn dis" style="left:666.6px;top:445.8px;width:55.6px"><span class="s"><u>L</u>istagem &gt;&gt;</span></div>
<div class="a btn" style="left:726.4px;top:445.8px;width:55.8px;text-align:left;padding-left:4.6px"><span class="s" style="transform-origin:0 0;margin:0">Soluções</span></div>
<svg class="a" style="left:766.7px;top:448.9px" width="11.7" height="10.8" viewBox="0 0 11.7 10.8"><rect width="11.7" height="10.8" fill="#1583c8"/><text x="5.85" y="9" text-anchor="middle" font-family="Liberation Sans, sans-serif" font-weight="bold" font-size="9.6" fill="#fff">?</text></svg>
<!--/DLG-->
</body>
</html>
